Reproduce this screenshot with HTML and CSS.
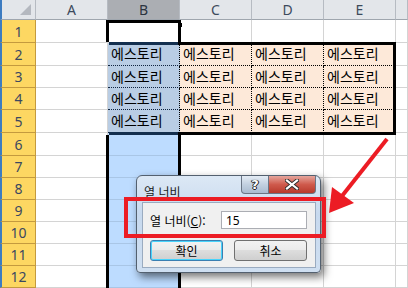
FILE: index.html
```html
<!DOCTYPE html>
<html lang="ko">
<head>
    <meta charset="UTF-8">
    <title>열 너비</title>
    <link rel="stylesheet" href="styles.css">
</head>
<body>
    <div class="sheet">
        <div class="corner"></div>
        <div class="ch">A</div>
        <div class="ch ch-sel">B</div>
        <div class="ch">C</div>
        <div class="ch">D</div>
        <div class="ch">E</div>
        <div class="ch"></div>

        <div class="rh">1</div><div class="c"></div><div class="c active"></div><div class="c"></div><div class="c"></div><div class="c"></div><div class="c"></div>
        <div class="rh">2</div><div class="c"></div><div class="c t sel">에스토리</div><div class="c t">에스토리</div><div class="c t">에스토리</div><div class="c t">에스토리</div><div class="c"></div>
        <div class="rh">3</div><div class="c"></div><div class="c t sel">에스토리</div><div class="c t">에스토리</div><div class="c t">에스토리</div><div class="c t">에스토리</div><div class="c"></div>
        <div class="rh">4</div><div class="c"></div><div class="c t sel">에스토리</div><div class="c t">에스토리</div><div class="c t">에스토리</div><div class="c t">에스토리</div><div class="c"></div>
        <div class="rh">5</div><div class="c"></div><div class="c t sel">에스토리</div><div class="c t">에스토리</div><div class="c t">에스토리</div><div class="c t">에스토리</div><div class="c"></div>
        <div class="rh">6</div><div class="c"></div><div class="c sel"></div><div class="c"></div><div class="c"></div><div class="c"></div><div class="c"></div>
        <div class="rh">7</div><div class="c"></div><div class="c sel"></div><div class="c"></div><div class="c"></div><div class="c"></div><div class="c"></div>
        <div class="rh">8</div><div class="c"></div><div class="c sel"></div><div class="c"></div><div class="c"></div><div class="c"></div><div class="c"></div>
        <div class="rh">9</div><div class="c"></div><div class="c sel"></div><div class="c"></div><div class="c"></div><div class="c"></div><div class="c"></div>
        <div class="rh">10</div><div class="c"></div><div class="c sel"></div><div class="c"></div><div class="c"></div><div class="c"></div><div class="c"></div>
        <div class="rh">11</div><div class="c"></div><div class="c sel"></div><div class="c"></div><div class="c"></div><div class="c"></div><div class="c"></div>
        <div class="rh">12</div><div class="c"></div><div class="c sel"></div><div class="c"></div><div class="c"></div><div class="c"></div><div class="c"></div>

        <!-- 테두리 B2:E5 -->
        <div class="range-box"></div>
        <div class="range-sel top"></div>
        <div class="range-sel bottom"></div>
        <!-- 열 B 선택 -->
        <div class="sel-top"></div>
        <div class="sel-edge left upper"></div>
        <div class="sel-edge right upper"></div>
        <div class="sel-edge left lower"></div>
        <div class="sel-edge right lower"></div>
        <div class="fill-handle"></div>

        <div class="dialog">
            <div class="titlebar">
                <span class="title">열 너비</span>
                <div class="caption-buttons">
                    <span class="cap-btn help">?</span>
                    <span class="cap-btn close">
                        <svg width="14" height="11" viewBox="0 0 14 11">
                            <path d="M2 1.5 L12 9.5 M12 1.5 L2 9.5" stroke="#2b2b2b" stroke-width="4" stroke-linecap="square"/>
                            <path d="M2 1.5 L12 9.5 M12 1.5 L2 9.5" stroke="#fff" stroke-width="2.2" stroke-linecap="square"/>
                        </svg>
                    </span>
                </div>
            </div>
            <div class="client">
                <div class="field-row">
                    <label for="colWidth">열 너비(<u>C</u>):</label>
                    <input id="colWidth" class="width-input" type="text" value="15">
                </div>
                <div class="button-row">
                    <button class="btn default">확인</button>
                    <button class="btn">취소</button>
                </div>
            </div>
        </div>

        <div class="mark-box"></div>
        <svg class="arrow" width="408" height="288" viewBox="0 0 408 288">
            <line x1="387" y1="139" x2="342" y2="196" stroke="#ec1c24" stroke-width="4"/>
            <polygon points="329,213 332,187 354,203" fill="#ec1c24"/>
        </svg>
    </div>
</body>
</html>
```

FILE: styles.css
```css
body {
    margin: 0;
    background-color: #ffffff;
    overflow: hidden;
}
.sheet {
    position: relative;
    display: grid;
    grid-template-columns: 36px repeat(5, 72px) 12px;
    grid-template-rows: 20px 23px 23px 22px 22px 23px 23px 22px 22px 22px 22px 22px 22px;
    width: 408px;
    height: 288px;
    overflow: hidden;
    font-family: "Noto Sans", "Noto Sans CJK KR", sans-serif;
}
.corner {
    position: relative;
    background-color: #e3e6ea;
    border-right: 1px solid #b6bbc2;
    border-bottom: 1px solid #9fa6ae;
    border-left: 2px solid #3d7cc1;
}
.corner::after {
    content: "";
    position: absolute;
    right: 4px;
    bottom: 4px;
    border-style: solid;
    border-width: 0 0 11px 11px;
    border-color: transparent transparent #b4b8bf transparent;
}
.ch {
    display: flex;
    align-items: center;
    justify-content: center;
    background-color: #e3e6ea;
    border-right: 1px solid #b6bbc2;
    border-bottom: 1px solid #9fa6ae;
    color: #3c4a5c;
    font-size: 14px;
}
.ch-sel {
    background-color: #abaeb3;
    color: #2c3440;
}
.rh {
    display: flex;
    align-items: center;
    justify-content: center;
    background-color: #fdd762;
    border-left: 2px solid #3d7cc1;
    border-right: 1px solid #c49a3e;
    border-bottom: 1px solid #c49a3e;
    color: #3b4860;
    font-size: 14px;
}
.c {
    border-right: 1px solid #d4d4d4;
    border-bottom: 1px solid #d4d4d4;
}
.c.sel {
    background-color: #bddcff;
    border-bottom-color: #a9c6e6;
}
.t {
    background-color: #fde9d9;
    border-right: 1px dotted #000000;
    border-bottom: 1px dotted #000000;
    padding-left: 3px;
    font-family: "Noto Sans CJK KR", sans-serif;
    font-size: 14px;
    line-height: 21px;
    color: #000000;
}
.t.sel {
    background-color: #b9cde4;
    border-bottom-color: #0f2440;
}
.range-box {
    position: absolute;
    left: 109px;
    top: 42px;
    width: 287px;
    height: 93px;
    box-sizing: border-box;
    border: 3px solid #000000;
    border-left: none;
}
.range-sel {
    position: absolute;
    left: 109px;
    width: 69px;
    height: 3px;
    background-color: #132f4f;
}
.range-sel.top { top: 42px; }
.range-sel.bottom { top: 132px; }
.sel-top {
    position: absolute;
    left: 106px;
    top: 20px;
    width: 75px;
    height: 3px;
    background-color: #000000;
}
.sel-edge {
    position: absolute;
    width: 3px;
    background-color: #000000;
}
.sel-edge.left { left: 106px; }
.sel-edge.right { left: 178px; }
.sel-edge.upper { top: 20px; height: 22px; }
.sel-edge.lower { top: 135px; height: 153px; }
.fill-handle {
    position: absolute;
    left: 178px;
    top: 23px;
    width: 4px;
    height: 4px;
    background-color: #000000;
}

/* 대화 상자 */
.dialog {
    position: absolute;
    left: 136px;
    top: 175px;
    width: 185px;
    height: 98px;
    box-sizing: border-box;
    border: 1px solid #53606f;
    border-radius: 6px 6px 4px 4px;
    background: linear-gradient(to bottom, #dce8f5, #c7d9ee 40%, #cfdff1);
    box-shadow: 3px 4px 8px rgba(0, 0, 0, 0.55);
    display: flex;
    flex-direction: column;
    padding: 0 4px 4px 5px;
    font-family: "Noto Sans CJK KR", sans-serif;
    font-size: 12px;
}
.titlebar {
    display: flex;
    justify-content: space-between;
    height: 26px;
}
.title {
    padding: 8px 0 0 2px;
    line-height: 16px;
    color: #1a1a1a;
}
.caption-buttons {
    display: flex;
    height: 18px;
}
.cap-btn {
    display: flex;
    align-items: center;
    justify-content: center;
    box-sizing: border-box;
    border: 1px solid #6a7585;
    border-top: none;
}
.help {
    width: 28px;
    background: linear-gradient(to bottom, #e4ecf5, #c2d0e0 50%, #a9bbd0);
    border-radius: 0 0 0 4px;
    font-family: "DejaVu Sans", sans-serif;
    font-weight: bold;
    font-size: 13px;
    color: #ffffff;
    text-shadow: 0 0 1px #222, 1px 0 0 #222, -1px 0 0 #222, 0 1px 0 #222;
}
.close {
    width: 47px;
    border-left: none;
    background: linear-gradient(to bottom, #e5a59c, #cf5a4c 50%, #b83a2c);
    border-radius: 0 0 4px 0;
}
.client {
    flex: 1;
    background-color: #f0f0f0;
    border: 1px solid #9aabc0;
    padding: 8px 8px 0 7px;
}
.field-row {
    display: flex;
    align-items: center;
    justify-content: space-between;
}
.field-row label {
    color: #000000;
    line-height: 16px;
    padding-top: 2px;
}
.width-input {
    width: 86px;
    height: 18px;
    box-sizing: border-box;
    border: 1px solid #abadb3;
    padding: 0 0 0 4px;
    font-family: "Noto Sans", sans-serif;
    font-size: 12px;
    color: #000000;
    background-color: #ffffff;
}
.button-row {
    display: flex;
    justify-content: space-between;
    margin-top: 11px;
}
.btn {
    width: 73px;
    height: 21px;
    box-sizing: border-box;
    border: 1px solid #707070;
    border-radius: 3px;
    background: linear-gradient(to bottom, #f2f2f2, #ebebeb 45%, #dddddd 50%, #cfcfcf);
    font-family: "Noto Sans CJK KR", sans-serif;
    font-size: 12px;
    line-height: 16px;
    color: #000000;
    padding: 0;
}
.btn.default {
    border-color: #3c7fb1;
    box-shadow: inset 0 0 0 1px #48d3fb;
}

/* 강조 표시 */
.mark-box {
    position: absolute;
    left: 124px;
    top: 197px;
    width: 202px;
    height: 41px;
    box-sizing: border-box;
    border: 4px solid #ec1c24;
}
.arrow {
    position: absolute;
    left: 0;
    top: 0;
}
```
